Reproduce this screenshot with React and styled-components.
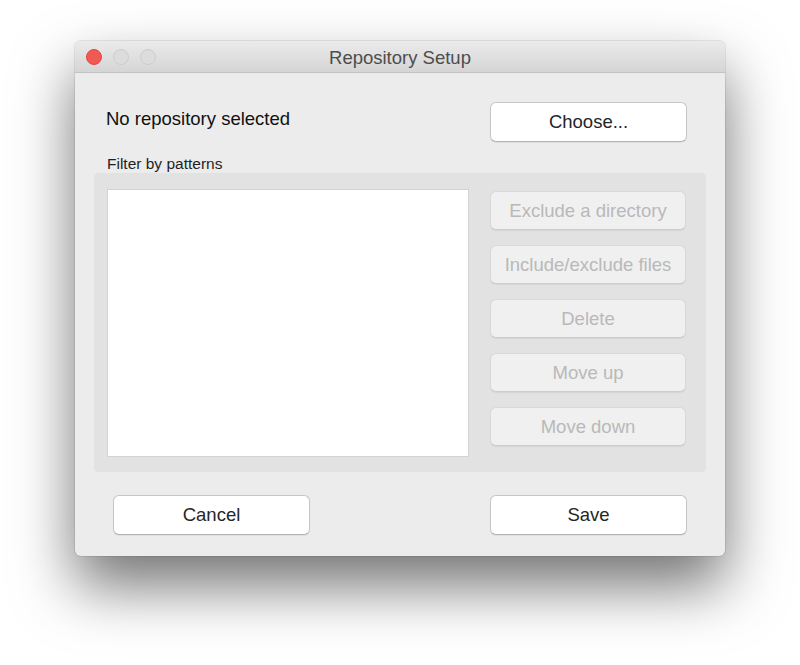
import React from "react";
import styled, { createGlobalStyle } from "styled-components";

const GlobalStyle = createGlobalStyle`
  html, body {
    margin: 0;
    padding: 0;
    background: #ffffff;
    font-family: "Liberation Sans", Arial, sans-serif;
  }
`;

const Page = styled.div`
  width: 800px;
  height: 665px;
  padding: 41px 0 0 75px;
  box-sizing: border-box;
`;

const Window = styled.div`
  width: 650px;
  height: 515px;
  background: #ececec;
  border-radius: 6px;
  box-shadow: 0 30px 60px rgba(0, 0, 0, 0.55), 0 0 0 1px rgba(0, 0, 0, 0.08);
  display: flex;
  flex-direction: column;
  overflow: hidden;
`;

const TitleBar = styled.div`
  height: 32px;
  flex-shrink: 0;
  position: relative;
  display: flex;
  align-items: center;
  justify-content: center;
  background: linear-gradient(#ebebeb, #d5d5d5);
  border-bottom: 1px solid #c2c2c2;
  box-sizing: border-box;
`;

const Lights = styled.div`
  position: absolute;
  left: 11px;
  top: 8px;
  display: flex;
  gap: 11px;
`;

const Light = styled.span`
  width: 16px;
  height: 16px;
  border-radius: 50%;
  box-sizing: border-box;
  background: ${(p) => (p.$red ? "#f15a52" : "#dcdcdc")};
  border: 1px solid ${(p) => (p.$red ? "#e2463f" : "#cdcdcd")};
`;

const Title = styled.div`
  font-size: 18.5px;
  color: #4d4d4d;
  margin-top: 2px;
`;

const Content = styled.div`
  flex: 1;
  padding: 29px 19px 0 19px;
  display: flex;
  flex-direction: column;
`;

const TopRow = styled.div`
  display: flex;
  align-items: center;
  justify-content: space-between;
  padding: 0 19px 0 12px;
`;

const Status = styled.div`
  font-size: 18.5px;
  color: #111;
  margin-top: -6px;
`;

const Button = styled.button`
  width: 197px;
  height: 40px;
  box-sizing: border-box;
  border-radius: 6px;
  font-family: "Liberation Sans", Arial, sans-serif;
  font-size: 18.5px;
  cursor: default;
  background: ${(p) => (p.disabled ? "#f0f0f0" : "#ffffff")};
  color: ${(p) => (p.disabled ? "#b9b9b9" : "#262626")};
  border: 1px solid ${(p) => (p.disabled ? "#d8d8d8" : "#c6c6c6")};
  border-bottom-color: ${(p) => (p.disabled ? "#cdcdcd" : "#b3b3b3")};
  box-shadow: 0 1px 1px rgba(0, 0, 0, 0.06);
  padding: 0;
`;

const FilterLabel = styled.div`
  font-size: 15.5px;
  line-height: 18px;
  color: #1f1f1f;
  margin: 13px 0 0 13px;
`;

const Panel = styled.div`
  height: 299px;
  box-sizing: border-box;
  background: #e2e2e2;
  border-radius: 4px;
  padding: 16px 20px 15px 13px;
  display: flex;
  gap: 21px;
`;

const PatternList = styled.div`
  width: 362px;
  background: #ffffff;
  border: 1px solid #d4d4d4;
  box-sizing: border-box;
`;

const SideButtons = styled.div`
  display: flex;
  flex-direction: column;
  gap: 15px;
  padding-top: 2px;
`;

const SideButton = styled(Button)`
  width: 196px;
  height: 39px;
`;

const BottomRow = styled.div`
  display: flex;
  justify-content: space-between;
  padding: 23px 19px 0 19px;
`;

export default function App() {
  return (
    <>
      <GlobalStyle />
      <Page>
        <Window>
          <TitleBar>
            <Lights>
              <Light $red />
              <Light />
              <Light />
            </Lights>
            <Title>Repository Setup</Title>
          </TitleBar>
          <Content>
            <TopRow>
              <Status>No repository selected</Status>
              <Button>Choose...</Button>
            </TopRow>
            <FilterLabel>Filter by patterns</FilterLabel>
            <Panel>
              <PatternList />
              <SideButtons>
                <SideButton disabled>Exclude a directory</SideButton>
                <SideButton disabled>Include/exclude files</SideButton>
                <SideButton disabled>Delete</SideButton>
                <SideButton disabled>Move up</SideButton>
                <SideButton disabled>Move down</SideButton>
              </SideButtons>
            </Panel>
            <BottomRow>
              <Button>Cancel</Button>
              <Button>Save</Button>
            </BottomRow>
          </Content>
        </Window>
      </Page>
    </>
  );
}
